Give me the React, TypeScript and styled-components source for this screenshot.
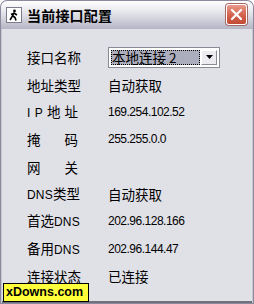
import React from 'react'
import styled, { createGlobalStyle } from 'styled-components'

const GlobalStyle = createGlobalStyle`
  html, body {
    margin: 0;
    padding: 0;
    background: #ffffff;
  }
`

const Window = styled.div`
  position: relative;
  width: 254px;
  height: 304px;
  display: flex;
  flex-direction: column;
  box-sizing: border-box;
  font-family: 'Noto Sans CJK SC', 'Liberation Sans', sans-serif;
  color: #000;
`

const TitleBar = styled.div`
  height: 29px;
  display: flex;
  align-items: center;
  padding: 0 6px 0 5px;
  border-radius: 7px 7px 0 0;
  border: 1px solid #8a8a9c;
  border-bottom: none;
  background: linear-gradient(#ffffff 0%, #f0f0f4 25%, #d6d6e0 60%, #b4b4c4 100%);
  box-sizing: border-box;
`

const AppIcon = styled.div`
  width: 16px;
  height: 16px;
  box-sizing: border-box;
  border: 1px solid #7c7c8c;
  background: #fff;
  display: flex;
  align-items: center;
  justify-content: center;
`

const Title = styled.div`
  margin-left: 5px;
  font-size: 14px;
  font-weight: 700;
  letter-spacing: 0.2px;
  flex: 1;
`

const CloseButton = styled.div`
  width: 21px;
  height: 21px;
  box-sizing: border-box;
  border: 1px solid #ffffff;
  border-radius: 3px;
  background: linear-gradient(#e9998a, #d4614c 55%, #c04a36);
  box-shadow: 0 0 0 1px #a46a68;
  display: flex;
  align-items: center;
  justify-content: center;
  margin-top: -1px;
`

const Body = styled.div`
  flex: 1;
  background: #e0e0e7;
  border: 1px solid #8a8a9c;
  border-top: none;
  box-shadow: inset 1px 0 0 #c8c8d4, inset -1px 0 0 #c8c8d4, inset 0 -2px 0 #70707e;
  padding: 14.5px 0 0 26px;
  display: grid;
  grid-auto-rows: 27.35px;
  align-content: start;
`

const Row = styled.div`
  display: flex;
  align-items: center;
`

const Label = styled.div<{ $spread?: boolean }>`
  width: 55px;
  box-sizing: border-box;
  padding-right: ${({ $spread }) => ($spread ? '4px' : '0')};
  margin-right: 26px;
  display: flex;
  align-items: baseline;
  justify-content: ${({ $spread }) => ($spread ? 'space-between' : 'flex-start')};
  font-size: 13.5px;
  line-height: 14px;
  white-space: nowrap;
`

const Latin = styled.span`
  font-family: 'Liberation Sans', sans-serif;
  font-size: 12px;
  letter-spacing: 0.2px;
`

const Value = styled.div<{ $num?: boolean }>`
  font-family: ${({ $num }) =>
    $num ? "'Liberation Sans', sans-serif" : "'Noto Sans CJK SC', sans-serif"};
  font-size: ${({ $num }) => ($num ? '12px' : '13.5px')};
  letter-spacing: ${({ $num }) => ($num ? '-0.5px' : '0')};
  line-height: 14px;
  white-space: nowrap;
`

const Combo = styled.div`
  width: 112px;
  height: 21px;
  box-sizing: border-box;
  border: 1px solid #8a8a96;
  background: #ffffff;
  display: flex;
  align-items: stretch;
  padding: 2px;
  gap: 1px;
`

const ComboText = styled.div`
  flex: 1;
  background: #adaebd;
  outline: 1px dotted #000;
  outline-offset: -1px;
  display: flex;
  align-items: center;
  padding-left: 1px;
  font-size: 13.5px;
  line-height: 15px;
  white-space: nowrap;
`

const ComboButton = styled.div`
  width: 16px;
  box-sizing: border-box;
  background: #ececf0;
  border: 1px solid;
  border-color: #ffffff #8a8a96 #8a8a96 #ffffff;
  display: flex;
  align-items: center;
  justify-content: center;
`

const Watermark = styled.div`
  position: absolute;
  left: 3px;
  bottom: 2px;
  width: 86px;
  height: 19px;
  box-sizing: border-box;
  border: 1px solid #000;
  background: #ffff3c;
  font-family: 'Liberation Sans', sans-serif;
  font-weight: 700;
  font-size: 12.5px;
  line-height: 17px;
  padding-left: 2px;
`

type Item = { label: string[]; spread?: boolean; value?: string; num?: boolean }

const items: Item[] = [
  { label: ['地址类型'], value: '自动获取' },
  { label: ['I', 'P', '地', '址'], spread: true, value: '169.254.102.52', num: true },
  { label: ['掩', '码'], spread: true, value: '255.255.0.0', num: true },
  { label: ['网', '关'], spread: true },
  { label: ['DNS', '类型'], value: '自动获取' },
  { label: ['首选', 'DNS'], value: '202.96.128.166', num: true },
  { label: ['备用', 'DNS'], value: '202.96.144.47', num: true },
  { label: ['连接状态'], value: '已连接' },
]

const isLatin = (s: string) => /^[A-Za-z]+$/.test(s)

const App = () => {
  return (
    <Window>
      <GlobalStyle />
      <TitleBar>
        <AppIcon>
          <svg width="12" height="12" viewBox="0 0 12 12">
            <circle cx="6.5" cy="2" r="1.4" fill="#000" />
            <path d="M6 3.5 L4.5 7 L2 11 M5 7 L7 8.5 L8 11.5 M5.8 4 L9 6 M5.5 4.5 L3 5.5" stroke="#000" strokeWidth="1.6" fill="none" />
          </svg>
        </AppIcon>
        <Title>当前接口配置</Title>
        <CloseButton>
          <svg width="13" height="13" viewBox="0 0 13 13">
            <path d="M2 2 L11 11 M11 2 L2 11" stroke="#fff" strokeWidth="2.2" strokeLinecap="round" />
          </svg>
        </CloseButton>
      </TitleBar>
      <Body>
        <Row>
          <Label>接口名称</Label>
          <Combo>
            <ComboText>本地连接 2</ComboText>
            <ComboButton>
              <svg width="7" height="4" viewBox="0 0 7 4">
                <path d="M0 0 H7 L3.5 4 Z" fill="#000" />
              </svg>
            </ComboButton>
          </Combo>
        </Row>
        {items.map((item, i) => (
          <Row key={i}>
            <Label $spread={item.spread}>
              {item.label.map((part, j) =>
                isLatin(part) ? <Latin key={j}>{part}</Latin> : <span key={j}>{part}</span>
              )}
            </Label>
            {item.value && <Value $num={item.num}>{item.value}</Value>}
          </Row>
        ))}
      </Body>
      <Watermark>xDowns.com</Watermark>
    </Window>
  )
}

export default App
